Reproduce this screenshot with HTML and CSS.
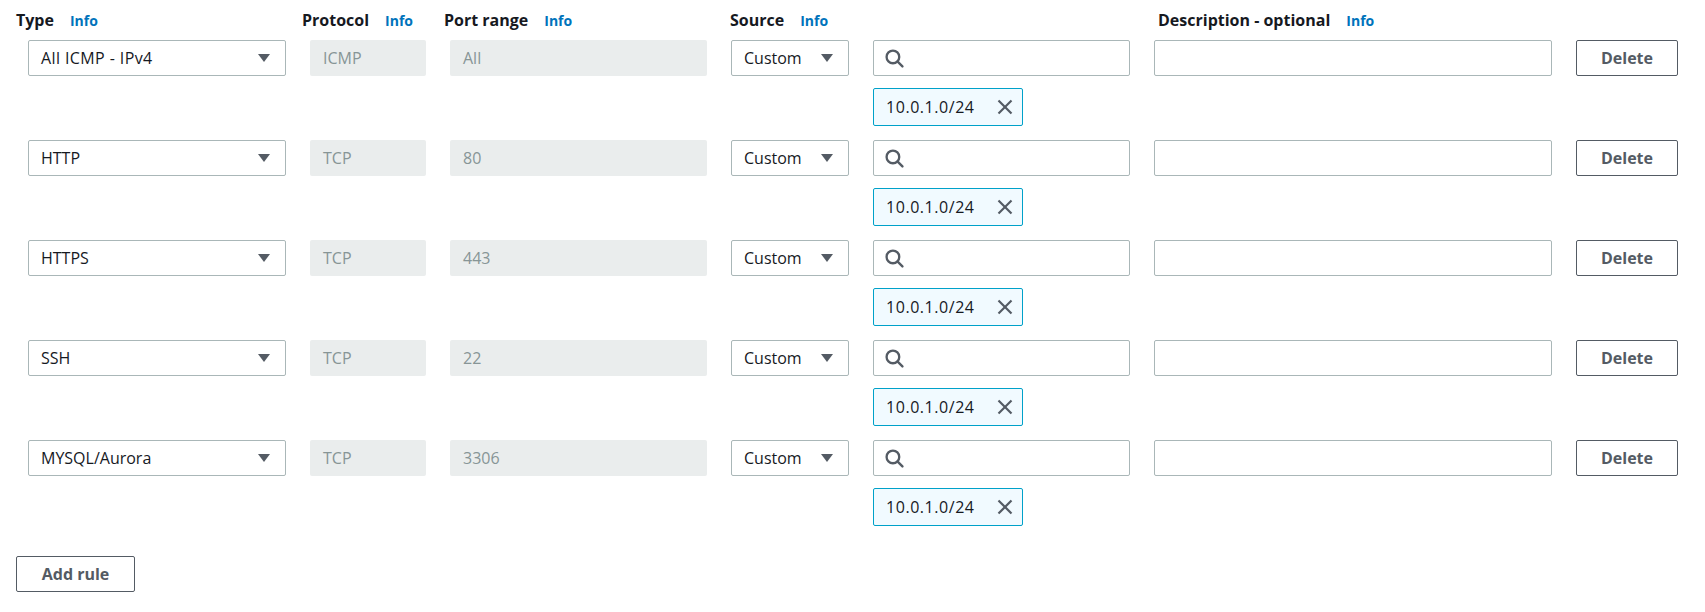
FILE: index.html
```html
<!DOCTYPE html>
<html lang="en">
<head>
<meta charset="utf-8">
<title>Inbound rules</title>
<link rel="stylesheet" href="styles.css">
</head>
<body>
<div class="page">
  <div class="grid header">
    <div class="hd hd-type"><span class="lbl">Type</span><a class="info">Info</a></div>
    <div class="hd hd-proto"><span class="lbl">Protocol</span><a class="info">Info</a></div>
    <div class="hd hd-port"><span class="lbl">Port range</span><a class="info">Info</a></div>
    <div class="hd hd-src"><span class="lbl">Source</span><a class="info">Info</a></div>
    <div class="hd"></div>
    <div class="hd hd-desc"><span class="lbl">Description - optional</span><a class="info">Info</a></div>
    <div class="hd"></div>
  </div>

  <div class="grid rule">
    <div class="select"><span class="wide">All ICMP - IPv4</span><svg class="caret" viewBox="0 0 12 8"><polygon points="0,0 12,0 6,8"/></svg></div>
    <div class="disabled">ICMP</div>
    <div class="disabled">All</div>
    <div class="select"><span>Custom</span><svg class="caret" viewBox="0 0 12 8"><polygon points="0,0 12,0 6,8"/></svg></div>
    <div class="search"><svg class="mag" viewBox="0 0 18 18"><circle cx="7.5" cy="7.5" r="6"/><line x1="12" y1="12" x2="16.5" y2="16.5"/></svg></div>
    <div class="text"></div>
    <button class="btn">Delete</button>
    <div class="token"><span>10.0.1.0/24</span><svg class="x" viewBox="0 0 16 16"><line x1="1.5" y1="1.5" x2="14.5" y2="14.5"/><line x1="14.5" y1="1.5" x2="1.5" y2="14.5"/></svg></div>
  </div>

  <div class="grid rule">
    <div class="select"><span>HTTP</span><svg class="caret" viewBox="0 0 12 8"><polygon points="0,0 12,0 6,8"/></svg></div>
    <div class="disabled">TCP</div>
    <div class="disabled">80</div>
    <div class="select"><span>Custom</span><svg class="caret" viewBox="0 0 12 8"><polygon points="0,0 12,0 6,8"/></svg></div>
    <div class="search"><svg class="mag" viewBox="0 0 18 18"><circle cx="7.5" cy="7.5" r="6"/><line x1="12" y1="12" x2="16.5" y2="16.5"/></svg></div>
    <div class="text"></div>
    <button class="btn">Delete</button>
    <div class="token"><span>10.0.1.0/24</span><svg class="x" viewBox="0 0 16 16"><line x1="1.5" y1="1.5" x2="14.5" y2="14.5"/><line x1="14.5" y1="1.5" x2="1.5" y2="14.5"/></svg></div>
  </div>

  <div class="grid rule">
    <div class="select"><span>HTTPS</span><svg class="caret" viewBox="0 0 12 8"><polygon points="0,0 12,0 6,8"/></svg></div>
    <div class="disabled">TCP</div>
    <div class="disabled">443</div>
    <div class="select"><span>Custom</span><svg class="caret" viewBox="0 0 12 8"><polygon points="0,0 12,0 6,8"/></svg></div>
    <div class="search"><svg class="mag" viewBox="0 0 18 18"><circle cx="7.5" cy="7.5" r="6"/><line x1="12" y1="12" x2="16.5" y2="16.5"/></svg></div>
    <div class="text"></div>
    <button class="btn">Delete</button>
    <div class="token"><span>10.0.1.0/24</span><svg class="x" viewBox="0 0 16 16"><line x1="1.5" y1="1.5" x2="14.5" y2="14.5"/><line x1="14.5" y1="1.5" x2="1.5" y2="14.5"/></svg></div>
  </div>

  <div class="grid rule">
    <div class="select"><span>SSH</span><svg class="caret" viewBox="0 0 12 8"><polygon points="0,0 12,0 6,8"/></svg></div>
    <div class="disabled">TCP</div>
    <div class="disabled">22</div>
    <div class="select"><span>Custom</span><svg class="caret" viewBox="0 0 12 8"><polygon points="0,0 12,0 6,8"/></svg></div>
    <div class="search"><svg class="mag" viewBox="0 0 18 18"><circle cx="7.5" cy="7.5" r="6"/><line x1="12" y1="12" x2="16.5" y2="16.5"/></svg></div>
    <div class="text"></div>
    <button class="btn">Delete</button>
    <div class="token"><span>10.0.1.0/24</span><svg class="x" viewBox="0 0 16 16"><line x1="1.5" y1="1.5" x2="14.5" y2="14.5"/><line x1="14.5" y1="1.5" x2="1.5" y2="14.5"/></svg></div>
  </div>

  <div class="grid rule">
    <div class="select"><span>MYSQL/Aurora</span><svg class="caret" viewBox="0 0 12 8"><polygon points="0,0 12,0 6,8"/></svg></div>
    <div class="disabled">TCP</div>
    <div class="disabled">3306</div>
    <div class="select"><span>Custom</span><svg class="caret" viewBox="0 0 12 8"><polygon points="0,0 12,0 6,8"/></svg></div>
    <div class="search"><svg class="mag" viewBox="0 0 18 18"><circle cx="7.5" cy="7.5" r="6"/><line x1="12" y1="12" x2="16.5" y2="16.5"/></svg></div>
    <div class="text"></div>
    <button class="btn">Delete</button>
    <div class="token"><span>10.0.1.0/24</span><svg class="x" viewBox="0 0 16 16"><line x1="1.5" y1="1.5" x2="14.5" y2="14.5"/><line x1="14.5" y1="1.5" x2="1.5" y2="14.5"/></svg></div>
  </div>

  <button class="btn add">Add rule</button>
</div>
</body>
</html>
```

FILE: styles.css
```css
* { box-sizing: border-box; }
html, body { margin: 0; padding: 0; background: #ffffff; }
body {
  font-family: "Open Sans", "Noto Sans", sans-serif;
  font-size: 16px;
  color: #16191f;
}
.page {
  padding: 9px 0 0 16px;
}
.grid {
  display: grid;
  grid-template-columns: 258px 116px 257px 118px 257px 398px 102px;
  column-gap: 24px;
  margin-left: 12px;
}
.header {
  height: 22px;
  margin-bottom: 9px;
  align-items: baseline;
}
.hd {
  display: flex;
  align-items: baseline;
  gap: 16px;
  white-space: nowrap;
  line-height: 22px;
}
.lbl { font-weight: 700; font-size: 16px; color: #16191f; }
.info { font-weight: 700; font-size: 14px; color: #0073bb; }
.hd-type { margin-left: -12px; }
.hd-proto { margin-left: -8px; }
.hd-port { margin-left: -6px; }
.hd-src { margin-left: -1px; }
.hd-desc { margin-left: 4px; }

.rule {
  grid-template-rows: 36px 38px;
  row-gap: 12px;
  margin-bottom: 14px;
}
.select, .disabled, .search, .text {
  height: 36px;
  border-radius: 2px;
  display: flex;
  align-items: center;
  padding: 0 12px;
}
.select {
  border: 1px solid #aab7b8;
  justify-content: space-between;
  padding-right: 15px;
}
.wide { letter-spacing: 0.4px; }
.caret { width: 12px; height: 8px; fill: #545b64; flex: none; }
.disabled {
  background: #eaeded;
  color: #879596;
  padding-left: 13px;
}
.search { border: 1px solid #aab7b8; padding-left: 11px; }
.mag { width: 19px; height: 19px; fill: none; stroke: #545b64; stroke-width: 2.2; stroke-linecap: round; }
.text { border: 1px solid #aab7b8; }
.btn {
  height: 36px;
  border: 1px solid #545b64;
  border-radius: 2px;
  background: #ffffff;
  color: #545b64;
  font-family: "Open Sans", "Noto Sans", sans-serif;
  font-weight: 700;
  font-size: 16px;
  padding: 0;
}
.token {
  grid-column: 5;
  grid-row: 2;
  width: 150px;
  height: 38px;
  border: 1px solid #00a1c9;
  border-radius: 2px;
  background: #f1faff;
  display: flex;
  align-items: center;
  justify-content: space-between;
  padding: 0 9px 0 12px;
  letter-spacing: 0.55px;
}
.x { width: 16px; height: 16px; stroke: #545b64; stroke-width: 2.2; flex: none; }
.add {
  width: 119px;
  margin-top: 16px;
}
```
